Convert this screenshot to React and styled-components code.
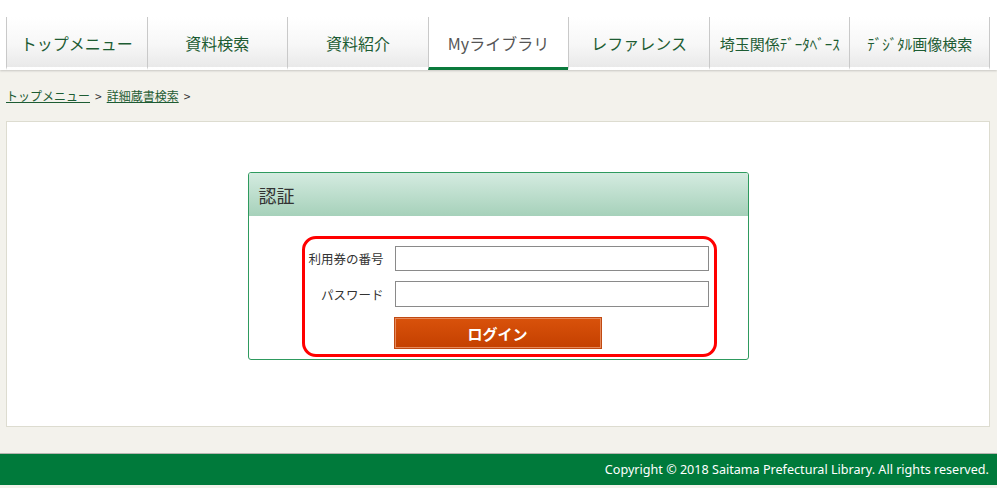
import React from "react";
import styled, { createGlobalStyle } from "styled-components";

const GlobalStyle = createGlobalStyle`
  html, body {
    margin: 0;
    padding: 0;
    background: #f3f2ec;
    font-family: "Noto Sans CJK JP", "Noto Sans", sans-serif;
    color: #333;
  }
`;

const tabs = [
  "トップメニュー",
  "資料検索",
  "資料紹介",
  "Myライブラリ",
  "レファレンス",
  "埼玉関係ﾃﾞｰﾀﾍﾞｰｽ",
  "ﾃﾞｼﾞﾀﾙ画像検索",
];

const Page = styled.div`
  width: 997px;
  min-height: 488px;
`;

const Header = styled.header`
  background: #fff;
  padding-top: 17px;
  box-shadow: 0 1px 2px rgba(0, 0, 0, 0.18);
  position: relative;
`;

const Nav = styled.nav`
  display: grid;
  grid-template-columns: repeat(7, 1fr);
  width: 984px;
  margin-left: 6px;
`;

const Tab = styled.a`
  height: 53px;
  display: flex;
  align-items: center;
  justify-content: center;
  box-sizing: border-box;
  border-left: 1px solid #c9c9c9;
  border-right: ${(p) => (p.last ? "1px solid #c9c9c9" : "none")};
  border-bottom: 3px solid ${(p) => (p.active ? "#0a7a3c" : "transparent")};
  background: ${(p) =>
    p.active ? "#fff" : "linear-gradient(#ffffff 0%, #f7f7f7 55%, #e9e9e9 100%)"};
  color: ${(p) => (p.active ? "#555" : "#1d5c33")};
  font-size: ${(p) => (p.small ? "15px" : "16px")};
  text-decoration: none;
  white-space: nowrap;
  padding-top: 2px;
`;

const Breadcrumb = styled.div`
  padding: 15px 6px 0;
  height: 35px;
  font-size: 12px;
  color: #333;
  box-sizing: border-box;
  margin-top: 2px;
  margin-bottom: 14px;
`;

const Crumb = styled.a`
  color: #1d5c33;
  text-decoration: underline;
`;

const Sep = styled.span`
  margin: 0 5px;
`;

const Content = styled.main`
  margin: 0 7px 0 6px;
  background: #fff;
  border: 1px solid #dddcd0;
  padding: 50px 0 66px;
  display: flex;
  justify-content: center;
`;

const Panel = styled.section`
  width: 501px;
  border: 1px solid #2e9a5e;
  border-radius: 3px;
  box-sizing: border-box;
  overflow: hidden;
  background: #fff;
`;

const PanelHead = styled.h2`
  margin: 0;
  height: 43px;
  display: flex;
  align-items: center;
  padding-left: 10px;
  font-size: 18px;
  font-weight: normal;
  color: #333;
  background: linear-gradient(#d4ebe0, #a6d1ba);
`;

const PanelBody = styled.div`
  padding: 20px 31px 2px 53px;
`;

const Highlight = styled.form`
  border: 3px solid #ff0000;
  border-radius: 14px;
  padding: 7px 5px 5px 0;
  display: grid;
  grid-template-columns: 82px 314px;
  column-gap: 8px;
  row-gap: 10px;
  align-items: center;
`;

const Label = styled.label`
  font-size: 12.5px;
  color: #333;
  text-align: right;
  padding-right: 3px;
  white-space: nowrap;
`;

const Input = styled.input`
  height: ${(p) => p.h || 25}px;
  width: 314px;
  box-sizing: border-box;
  border: 1px solid #8a8a8a;
  margin: 0;
  padding: 2px 4px;
`;

const Button = styled.button`
  grid-column: 2;
  width: 208px;
  height: 32px;
  margin-left: -1px;
  border: 1px solid #c04a12;
  box-shadow: inset 0 0 0 1px #e68a5c;
  background: linear-gradient(#d9520b, #c44000);
  color: #fff;
  font-family: "Noto Sans CJK JP", sans-serif;
  font-size: 15px;
  font-weight: bold;
  cursor: pointer;
`;

const Footer = styled.footer`
  margin-top: 26px;
  border-top: 1px solid #b5b5b0;
  background: #007a3b;
  height: 31px;
  display: flex;
  align-items: center;
  justify-content: flex-end;
  padding-right: 8px;
  color: #fff;
  font-family: "Noto Sans", "DejaVu Sans", sans-serif;
  font-size: 12.6px;
`;

export default function App() {
  return (
    <Page>
      <GlobalStyle />
      <Header>
        <Nav>
          {tabs.map((t, i) => (
            <Tab
              key={t}
              href="#"
              active={i === 3 ? 1 : 0}
              last={i === tabs.length - 1 ? 1 : 0}
              small={i >= 5 ? 1 : 0}
            >
              {t}
            </Tab>
          ))}
        </Nav>
      </Header>
      <Breadcrumb>
        <Crumb href="#">トップメニュー</Crumb>
        <Sep>&gt;</Sep>
        <Crumb href="#">詳細蔵書検索</Crumb>
        <Sep>&gt;</Sep>
      </Breadcrumb>
      <Content>
        <Panel>
          <PanelHead>認証</PanelHead>
          <PanelBody>
            <Highlight onSubmit={(e) => e.preventDefault()}>
              <Label htmlFor="card">利用券の番号</Label>
              <Input id="card" type="text" />
              <Label htmlFor="pw">パスワード</Label>
              <Input id="pw" type="password" h={26} />
              <Button type="submit">ログイン</Button>
            </Highlight>
          </PanelBody>
        </Panel>
      </Content>
      <Footer>Copyright © 2018 Saitama Prefectural Library. All rights reserved.</Footer>
    </Page>
  );
}
